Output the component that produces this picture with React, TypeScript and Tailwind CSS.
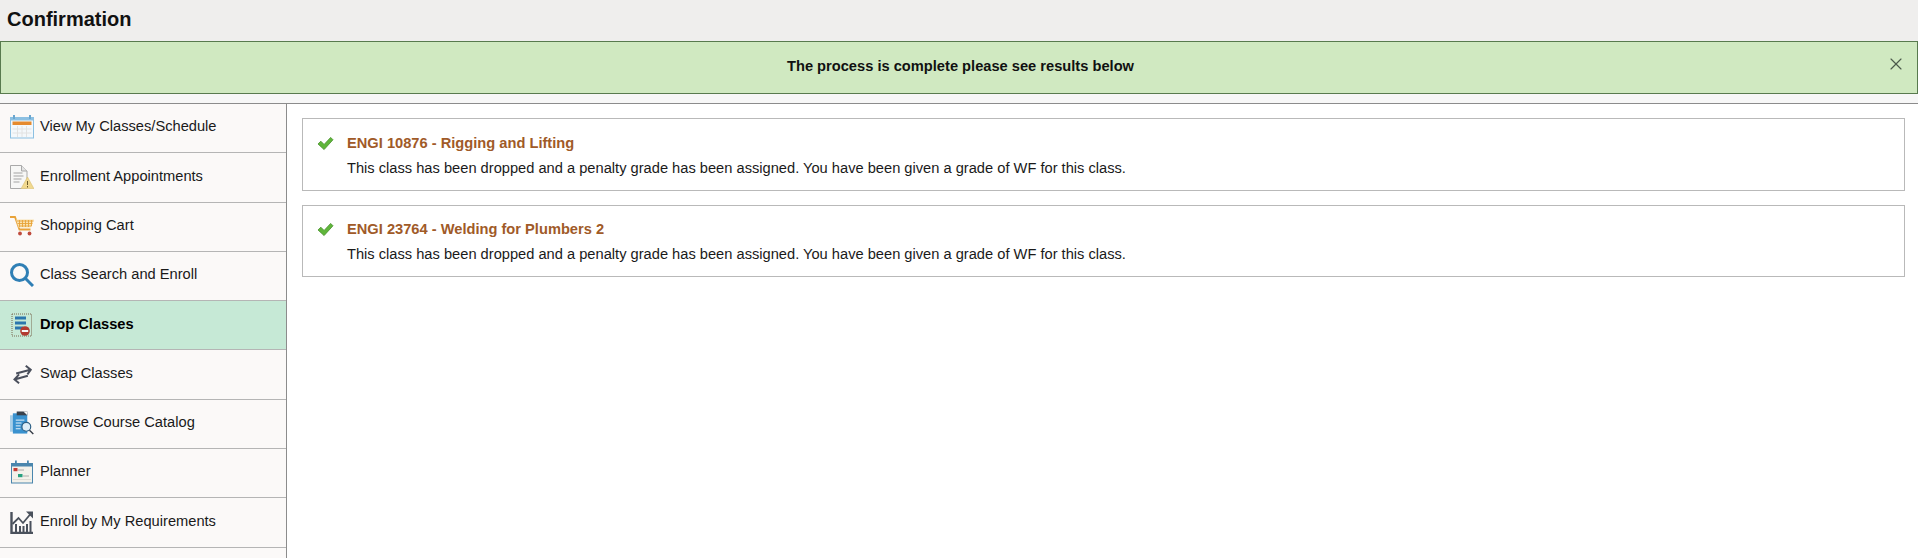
import React from "react";
import { X } from "lucide-react";

const CalendarIcon = () => (
  <svg viewBox="0 0 24 24" className="w-[24px] h-[24px]">
    <rect x="0.5" y="2.5" width="23" height="20.5" fill="#f4f8fb" stroke="#8cc0e2" />
    <rect x="1" y="2" width="22" height="3.5" fill="#8cc0e2" />
    <rect x="3" y="0" width="2" height="4" fill="#6aa6cf" />
    <rect x="19" y="0" width="2" height="4" fill="#6aa6cf" />
    <rect x="2.500" y="6.500" width="19" height="3.500" fill="#e58a2e" />
    <path d="M2.500 14h19M2.500 18h19M7.500 11v11M12 11v11M16.500 11v11" stroke="#e2e2e2" strokeWidth="1" fill="none" />
  </svg>
);

const AppointmentIcon = () => (
  <svg viewBox="0 0 24 24" className="w-[24px] h-[24px]">
    <path d="M0.500 0.500h11l5.500 5.500v17.500H0.500z" fill="#f7f7f6" stroke="#a9a9a9" />
    <path d="M11.500 0.500v5.500h5.500" fill="#e4e4e4" stroke="#a9a9a9" />
    <path d="M3.500 8h9M3.500 11h10M3.500 14h8M3.500 17h6" stroke="#a3a3a3" strokeWidth="1" />
    <path d="M17.500 12 24 23.800H11z" fill="#f1d98f" stroke="#d8bd72" strokeWidth="0.600" />
    <path d="M17.500 16v4M17.500 21v1.500" stroke="#6b5a2a" strokeWidth="1" />
  </svg>
);

const CartIcon = () => (
  <svg viewBox="0 0 24 20" className="w-[24px] h-[20px]">
    <path d="M0 1h5l4.500 12.500h11" fill="none" stroke="#e8a33a" strokeWidth="1.800" />
    <path d="M6 3.500H24l-3 8H8.500z" fill="#f9e4b4" />
    <path d="M9.500 4v7M12.500 4v7M15.500 4v7M18.500 4v7M21.500 4v6M6.500 5h17M7.500 7.500h15M8.500 10h13" stroke="#e8a33a" strokeWidth="0.900" fill="none" />
    <circle cx="10" cy="17.500" r="1.900" fill="#bf4b3e" />
    <circle cx="19.500" cy="17.500" r="1.900" fill="#bf4b3e" />
  </svg>
);

const SearchIcon = () => (
  <svg viewBox="0 0 24 24" className="w-[24px] h-[24px]">
    <circle cx="9.500" cy="9.500" r="8" fill="none" stroke="#2f7fb5" strokeWidth="3" />
    <path d="M15.500 15.500l7.500 7.500" stroke="#2f7fb5" strokeWidth="3" />
  </svg>
);

const DropIcon = () => (
  <svg viewBox="0 0 24 24" className="w-[24px] h-[24px]">
    <rect x="2" y="1" width="19.500" height="22" fill="none" stroke="#7a6a52" strokeWidth="1" strokeDasharray="1 1" />
    <rect x="5" y="3.500" width="11" height="3" fill="#2b77ad" />
    <rect x="5" y="8.500" width="11" height="3" fill="#2b77ad" />
    <rect x="5" y="13.500" width="8" height="3" fill="#2b77ad" />
    <circle cx="15" cy="18" r="4.800" fill="#b23a30" />
    <rect x="11.800" y="17" width="6.400" height="2" fill="#f7f7f7" />
  </svg>
);

const SwapIcon = () => (
  <svg viewBox="0 0 24 24" className="w-[20px] h-[20px]">
    <path d="M5 11.500 22 7M16.500 2 22.500 7l-4 5.500" fill="none" stroke="#4a4f5c" strokeWidth="2.400" />
    <path d="M19 14 3 18.500M8.500 12.500 3 18.500l5.500 4.500" fill="none" stroke="#4a4f5c" strokeWidth="2.400" />
  </svg>
);

const CatalogIcon = () => (
  <svg viewBox="0 0 25 24" className="w-[25px] h-[24px]">
    <path d="M0 4h3V2h6v19H0z" fill="#a9cfe8" />
    <path d="M3 2h15v21H3z" fill="#3a92cf" />
    <path d="M7 0h11v4H7z" fill="#39424d" />
    <path d="M14 0h4v4z" fill="#f7f7f7" />
    <path d="M6 9h9M6 12h6M6 15h5M6 18h5" stroke="#eef6fb" strokeWidth="1" />
    <circle cx="17" cy="16" r="4.600" fill="#dcedf8" stroke="#2c5f85" strokeWidth="1.200" />
    <path d="M20.300 19.500l4 4" stroke="#333a44" strokeWidth="1.400" />
  </svg>
);

const PlannerIcon = () => (
  <svg viewBox="0 0 24 24" className="w-[24px] h-[24px]">
    <rect x="1.500" y="3.500" width="21" height="19.500" fill="#f3f1ea" stroke="#4a86ad" />
    <rect x="1" y="3" width="22" height="3.500" fill="#4a86ad" />
    <rect x="5" y="0.500" width="1.800" height="4" fill="#4a86ad" />
    <rect x="17" y="0.500" width="1.800" height="4" fill="#4a86ad" />
    <rect x="3.500" y="8" width="4" height="3.200" fill="#c43b35" />
    <rect x="8" y="14" width="4.500" height="3.200" fill="#27a07e" />
    <path d="M8 10h6M13 16h6" stroke="#9a9a9a" strokeWidth="0.800" />
    <path d="M3 19.500h18" stroke="#d8d6cd" strokeWidth="0.800" />
  </svg>
);

const ChartIcon = () => (
  <svg viewBox="0 0 24 24" className="w-[24px] h-[24px]">
    <path d="M1.500 2v21H23" fill="none" stroke="#4a515c" strokeWidth="2.400" />
    <path d="M2.500 14 8.500 8l4.500 5L20.500 4" fill="none" stroke="#4a515c" strokeWidth="1.800" />
    <path d="M16 1.500h7V8.500z" fill="#4a515c" />
    <path d="M6 22v-8M10 22v-6M13.500 22v-6M17 22v-8M20.500 22v-11" stroke="#4a515c" strokeWidth="2" />
  </svg>
);

const navItems = [
  { label: "View My Classes/Schedule", icon: <CalendarIcon /> },
  { label: "Enrollment Appointments", icon: <AppointmentIcon /> },
  { label: "Shopping Cart", icon: <CartIcon /> },
  { label: "Class Search and Enroll", icon: <SearchIcon /> },
  { label: "Drop Classes", icon: <DropIcon />, active: true },
  { label: "Swap Classes", icon: <SwapIcon /> },
  { label: "Browse Course Catalog", icon: <CatalogIcon /> },
  { label: "Planner", icon: <PlannerIcon /> },
  { label: "Enroll by My Requirements", icon: <ChartIcon /> },
];

const results = [
  "ENGI 10876 - Rigging and Lifting",
  "ENGI 23764 - Welding for Plumbers 2",
];

const App = () => {
  return (
    <div className="h-[558px] w-full overflow-hidden bg-white font-['Liberation_Sans',Arial,sans-serif] text-[14.66px] text-[#1a1a1a]">
      <div className="h-[41px] bg-[#efeeed] pl-[7px] pb-[4px] flex items-center">
        <h1 className="text-[20px] font-bold text-[#111]">Confirmation</h1>
      </div>

      <div className="h-[53px] bg-[#d0e9c1] border border-[#587a4e] pb-[2px] pl-[3px] flex items-center justify-center relative">
        <p className="font-bold text-[#111]">The process is complete please see results below</p>
        <X className="absolute right-[11px] top-[12px] w-[20px] h-[20px] text-[#4c5a4c]" strokeWidth={1.400} />
      </div>

      <div className="h-[9px] bg-[#f7f7f7]" />

      <div className="flex border-t border-[#8c8c8c]">
        <nav className="w-[287px] shrink-0 h-[455px] bg-[#fbf9f8] border-r border-[#8c8c8c]">
          {navItems.map((item) => (
            <div
              key={item.label}
              className={
                item.active
                  ? "h-[49.300px] flex items-center gap-[6px] pl-[10px] pb-[1.500px] border-b border-[#b5b5b5] bg-[#c6e9d6] font-bold text-black"
                  : "h-[49.300px] flex items-center gap-[6px] pl-[10px] pb-[1.500px] border-b border-[#b5b5b5]"
              }
            >
              <span className="w-[24px] flex justify-center">{item.icon}</span>
              <span>{item.label}</span>
            </div>
          ))}
        </nav>

        <main className="flex-1 pt-[14px] pl-[15px] pr-[13px] flex flex-col gap-[14px]">
          {results.map((title) => (
            <div key={title} className="h-[73px] last:h-[72px] border border-[#b9b9b9] flex pl-[14px] pt-[14px] first:pt-[15px]">
              <svg viewBox="0 0 18 16" className="w-[17px] h-[15px] mt-[2px] shrink-0">
                <path d="M1 8.500 4 5.500l3.500 3.500L14.500 1.500 17 4 7.500 14.500z" fill="#5fb63a" stroke="#3f8a22" strokeWidth="0.800" />
              </svg>
              <div className="ml-[13px]">
                <div className="font-bold text-[#a05a28] leading-[18px]">{title}</div>
                <div className="mt-[7px] leading-[18px]">
                  This class has been dropped and a penalty grade has been assigned. You have been given a grade of WF for this class.
                </div>
              </div>
            </div>
          ))}
        </main>
      </div>
    </div>
  );
};

export default App;
